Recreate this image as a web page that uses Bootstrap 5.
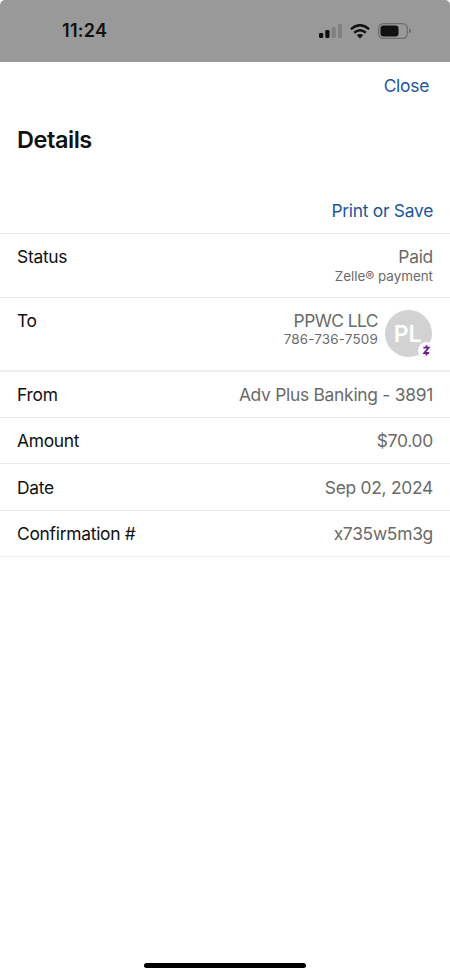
<!DOCTYPE html>
<html lang="en">
<head>
<meta charset="utf-8">
<meta name="viewport" content="width=device-width, initial-scale=1">
<title>Details</title>
<link href="https://cdn.jsdelivr.net/npm/bootstrap@5.3.0/dist/css/bootstrap.min.css" rel="stylesheet">
<style>
body{font-family:Inter,"Liberation Sans",sans-serif;color:#111;background:#fff;font-size:17.4px;line-height:22px;letter-spacing:-.27px}
.screen{height:976px;overflow:hidden}
.status-bar{height:62px;background:#999;border-radius:5px 5px 0 0;padding:0 39px 0 62px}
.clock{font-size:18px;font-weight:600;letter-spacing:.3px;color:#111}
.bar-icons{gap:8px}
.blue-link{color:#1d5799;text-decoration:none}
.close-line{padding:13px 21px 0 0;height:48px}
.heading{font-size:23.5px;line-height:30px;font-weight:600;letter-spacing:-.45px;padding:15px 17px 0;height:79px}
.print-line{padding:11px 17px 0 0;height:44px}
.detail-row{padding:12px 17px 0;border-top:1px solid #e9e9e9;height:46.4px}
.detail-row.status-row{height:64px}
.detail-row.payee-row{height:73px}
.detail-row.from-row{border-top:2px solid #ededed;height:47px}
.detail-row.low-row{padding-top:12.6px}
.details-end{border-bottom:1px solid #ececec}
.value{color:#6a6a6a}
.sub-value{font-size:13.4px;line-height:16px;letter-spacing:0}
.sub-value.phone{line-height:15px;letter-spacing:.2px}
.payee-name{letter-spacing:-.55px}
.payee-text{margin-right:7px}
.avatar{width:47px;height:47px;background:#d2d2d2;color:#fff;font-size:23px;font-weight:600;margin-right:1px;padding-right:2px}
.zelle{right:-3px;bottom:-2px;width:17px;height:17px}
.home-bar{width:162px;height:5px;margin-bottom:8.5px}
</style>
</head>
<body>
<div class="screen d-flex flex-column">
  <header class="status-bar d-flex align-items-center justify-content-between flex-shrink-0">
    <span class="clock">11:24</span>
    <span class="bar-icons d-flex align-items-center">
      <svg width="23" height="15" viewBox="0 0 23 15"><g fill="#111"><rect x="0" y="9" width="4.2" height="5" rx="1.2"/><rect x="6.3" y="6" width="4.2" height="8" rx="1.2"/></g><g fill="#808080"><rect x="12.700" y="3" width="4" height="11" rx="1.2"/><rect x="19" y="0" width="4" height="14" rx="1.2"/></g></svg>
      <svg width="20" height="15" viewBox="0 0 20 15"><g fill="none" stroke="#111" stroke-width="2.500"><path d="M.9 5.100Q10-2.700 19.100 5.100"/><path d="M4.200 8.700Q10 3.700 15.800 8.700"/></g><path d="M6.800 11.200Q10 8.600 13.200 11.200L10 14.400Z" fill="#111"/></svg>
      <svg width="33" height="16" viewBox="0 0 33 16"><rect x=".7" y=".7" width="28.600" height="14.600" rx="4.600" fill="none" stroke="#6d6d6d" stroke-width="1.200"/><rect x="2.500" y="2.500" width="18" height="11" rx="3" fill="#111"/><path d="M31 5.500Q33 6.300 33 8T31 10.500Z" fill="#6d6d6d"/></svg>
    </span>
  </header>
  <div class="close-line text-end flex-shrink-0"><a href="#" class="blue-link">Close</a></div>
  <h1 class="heading m-0 flex-shrink-0">Details</h1>
  <div class="print-line text-end flex-shrink-0"><a href="#" class="blue-link">Print or Save</a></div>
  <main class="details-end">
    <div class="detail-row status-row d-flex justify-content-between">
      <span>Status</span>
      <div class="value text-end"><div>Paid</div><div class="sub-value">Zelle® payment</div></div>
    </div>
    <div class="detail-row payee-row d-flex justify-content-between">
      <span>To</span>
      <div class="d-flex align-items-start">
        <div class="value payee-text text-end"><div class="payee-name">PPWC LLC</div><div class="sub-value phone">786-736-7509</div></div>
        <div class="avatar rounded-circle position-relative d-flex align-items-center justify-content-center">PL
          <svg class="zelle position-absolute" viewBox="0 0 17 17"><circle cx="8.500" cy="8.500" r="8.500" fill="#fff"/><path d="M5.400 5.700H10.600L6.200 11H11.200M8.500 3.300V5.700M8.500 11V13.400" fill="none" stroke="#6b2091" stroke-width="1.800"/></svg>
        </div>
      </div>
    </div>
    <div class="detail-row from-row d-flex justify-content-between"><span>From</span><span class="value">Adv Plus Banking - 3891</span></div>
    <div class="detail-row d-flex justify-content-between"><span>Amount</span><span class="value">$70.00</span></div>
    <div class="detail-row low-row d-flex justify-content-between"><span>Date</span><span class="value">Sep 02, 2024</span></div>
    <div class="detail-row low-row d-flex justify-content-between"><span>Confirmation #</span><span class="value">x735w5m3g</span></div>
  </main>
  <div class="home-bar bg-black rounded-pill mt-auto mx-auto flex-shrink-0"></div>
</div>
<script src="https://cdn.jsdelivr.net/npm/bootstrap@5.3.0/dist/js/bootstrap.bundle.min.js"></script>
</body>
</html>
